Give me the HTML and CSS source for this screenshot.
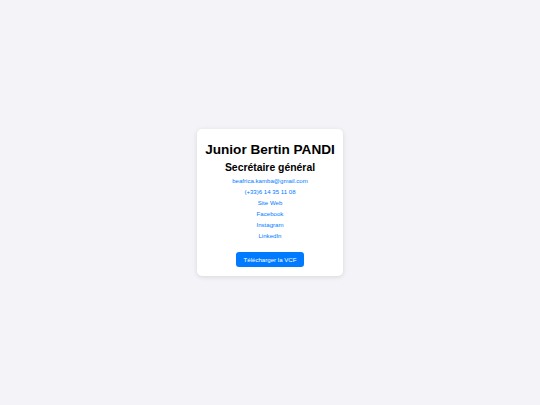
FILE: index.html
```html
<!DOCTYPE html>
<html lang="fr">
<head>
<meta charset="utf-8">
<link rel="stylesheet" href="styles.css">
</head>
<body>
<div class="page">
  <div class="card">
    <h1 class="name">Junior Bertin PANDI</h1>
    <h2 class="role">Secrétaire général</h2>
    <ul class="links">
      <li><a href="#">beafrica.kamba@gmail.com</a></li>
      <li><a href="#">(+33)6 14 35 11 08</a></li>
      <li><a href="#">Site Web</a></li>
      <li><a href="#">Facebook</a></li>
      <li><a href="#">Instagram</a></li>
      <li><a href="#">LinkedIn</a></li>
    </ul>
    <a class="btn" href="#">Télécharger la VCF</a>
  </div>
</div>
</body>
</html>
```

FILE: styles.css
```css
html, body {
  margin: 0;
  padding: 0;
  background: #f4f4f8;
  font-family: "Liberation Sans", Arial, sans-serif;
}
.page {
  width: 540px;
  height: 405px;
  display: flex;
  align-items: center;
  justify-content: center;
}
.card {
  width: 146px;
  box-sizing: border-box;
  background: #fff;
  border-radius: 5px;
  box-shadow: 0 1px 5px rgba(0,0,0,0.12);
  padding: 11px 0 9px;
  display: flex;
  flex-direction: column;
  align-items: center;
  text-align: center;
}
.name {
  margin: 0;
  font-size: 13.6px;
  line-height: 20px;
  font-weight: bold;
  color: #000;
  white-space: nowrap;
}
.role {
  margin: 0;
  font-size: 10.4px;
  line-height: 15px;
  font-weight: bold;
  color: #000;
}
.links {
  list-style: none;
  margin: 0;
  padding: 0;
}
.links li {
  font-size: 6.1px;
  line-height: 11px;
}
.links a {
  color: #007bff;
  text-decoration: none;
}
.btn {
  margin-top: 11px;
  display: block;
  background: #007bff;
  color: #fff;
  text-decoration: none;
  font-size: 6.1px;
  line-height: 15px;
  padding: 0 8px;
  border-radius: 3px;
}
```
